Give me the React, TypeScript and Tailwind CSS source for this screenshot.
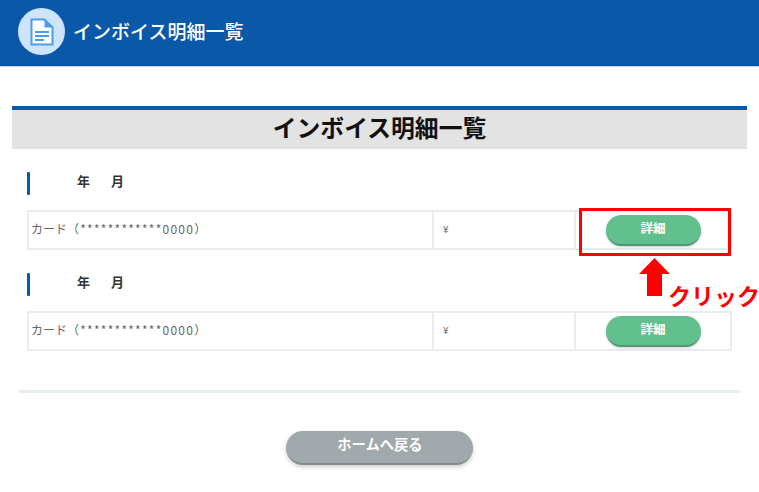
const font = { fontFamily: '"Noto Sans CJK JP", "Liberation Sans", sans-serif' };

function DocIcon() {
  return (
    <svg width="24" height="28" viewBox="0 0 24 28" fill="none">
      <path d="M1.5 1.5h13l8 8v17h-21z" fill="#fff" stroke="#4a9cf0" strokeWidth="2" />
      <path d="M14.5 1.5v8h8z" fill="#4a9cf0" />
      <path d="M5 14h14M5 18h14M5 22h9" stroke="#4a9cf0" strokeWidth="2" />
    </svg>
  );
}

function InvoiceGroup() {
  return (
    <div>
      <div className="ml-[15px] h-[23px] flex items-center text-[13px] font-bold text-[#333]">
        <div className="w-[3px] h-full bg-[#0a58a8] rounded-[1px]" />
        <div className="ml-[47px] pb-[5px] flex">
          <span>年</span>
          <span className="ml-[21px]">月</span>
        </div>
      </div>
      <div className="ml-[15px] mt-[15px] w-[705px] h-[40px] border-2 border-[#e9edf0] flex items-center text-[12px] text-[#666]">
        <div className="w-[405px] pl-[2px] pb-[2px] h-full flex items-center border-r-2 border-[#e9edf0]">
          <span>カード</span>
          <span className="tracking-[1.25px]">（************0000）</span>
        </div>
        <div className="w-[142px] pl-[9px] pb-[3px] h-full flex items-center border-r-2 border-[#e9edf0] text-[10px]">
          ¥
        </div>
        <div className="flex-1 flex justify-center">
          <button className="w-[95px] h-[31px] pb-[2px] rounded-full bg-[#62c08f] border-b-2 border-[#4d9a72] shadow-[0_1px_3px_rgba(0,0,0,0.2)] text-white text-[12.5px] font-bold">
            詳細
          </button>
        </div>
      </div>
    </div>
  );
}

export default function App() {
  return (
    <div className="relative w-[759px] h-[492px] bg-white overflow-hidden" style={font}>
      <header className="h-[67px] bg-[#0a58a8] border-b border-[#c4d3e4] flex items-center pl-[18px] pb-[3px]">
        <div className="w-[47px] h-[47px] rounded-full bg-[#cce4fc] flex items-center justify-center">
          <DocIcon />
        </div>
        <div className="ml-[8px] text-[19px] font-medium text-white">インボイス明細一覧</div>
      </header>

      <main className="pt-[39px]">
        <h1 className="mx-[12px] h-[43px] pb-[5px] border-t-4 border-[#0a58a8] bg-[#e3e3e3] flex items-center justify-center text-[23.8px] leading-none font-bold text-[#111]">
          インボイス明細一覧
        </h1>

        <div className="mt-[23px] ml-[12px] flex flex-col gap-[23px]">
          <InvoiceGroup />
          <InvoiceGroup />
        </div>

        <div className="mt-[39px] mx-[19px] h-[3px] bg-[#e6eef2]" />

        <div className="mt-[38px] flex justify-center pr-[1px]">
          <button className="w-[187px] h-[34px] pb-[6px] pl-[2px] rounded-full bg-[#a1a9ad] border-b-2 border-[#868d91] shadow-[0_2px_4px_rgba(0,0,0,0.2)] text-white text-[14.3px] font-bold">
            ホームへ戻る
          </button>
        </div>
      </main>

      {/* click annotation */}
      <div className="absolute left-[579px] top-[208px] w-[152px] h-[48px] border-[3px] border-[#ff0000]" />
      <svg className="absolute left-[638px] top-[257px]" width="33" height="40" viewBox="0 0 33 40">
        <path d="M16.5 1L32 17H24V39H9V17H1z" fill="#ff0000" />
      </svg>
      <div className="absolute left-[668px] top-[279px] text-[23px] leading-[32px] font-bold text-[#ff0000] whitespace-nowrap">
        クリック
      </div>
    </div>
  );
}
